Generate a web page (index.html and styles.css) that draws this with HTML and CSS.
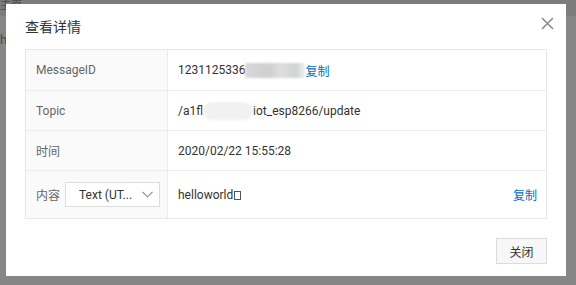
FILE: index.html
```html
<!DOCTYPE html>
<html lang="zh-CN">
<head>
    <meta charset="UTF-8">
    <title>查看详情</title>
    <link rel="stylesheet" href="styles.css">
</head>
<body>
    <div class="page-behind">
        <div class="behind-top">主面</div>
        <div class="behind-side">h</div>
    </div>

    <div class="modal">
        <div class="modal-header">
            <span class="modal-title">查看详情</span>
            <span class="modal-close">
                <svg width="13" height="13" viewBox="0 0 13 13">
                    <path d="M1 1 L12 12 M12 1 L1 12" stroke="#8c8c8c" stroke-width="1.6" fill="none"/>
                </svg>
            </span>
        </div>

        <div class="detail-table">
            <div class="row">
                <div class="label">MessageID</div>
                <div class="value">1231125336<span class="masked masked-id"></span><a class="copy">复制</a></div>
            </div>
            <div class="row">
                <div class="label">Topic</div>
                <div class="value">/a1fl<span class="masked masked-topic"></span>iot_esp8266/update</div>
            </div>
            <div class="row">
                <div class="label">时间</div>
                <div class="value">2020/02/22 15:55:28</div>
            </div>
            <div class="row row-tall">
                <div class="label">内容
                    <div class="select">
                        <span>Text (UT...</span>
                        <svg width="11" height="7" viewBox="0 0 11 7">
                            <path d="M0.5 0.8 L5.5 5.8 L10.5 0.8" stroke="#888" stroke-width="1.1" fill="none"/>
                        </svg>
                    </div>
                </div>
                <div class="value value-split">
                    <span>helloworld<span class="tofu"></span></span>
                    <a class="copy">复制</a>
                </div>
            </div>
        </div>

        <div class="modal-footer">
            <button class="btn">关闭</button>
        </div>
    </div>
</body>
</html>
```

FILE: styles.css
```css
body {
    margin: 0;
    width: 576px;
    height: 285px;
    background-color: #868686;
    font-family: Roboto, "Noto Sans CJK SC", sans-serif;
    font-size: 12px;
    color: #333;
    overflow: hidden;
    position: relative;
}
.page-behind {
    position: absolute;
    left: 0;
    top: 0;
    width: 576px;
    height: 285px;
}
.behind-top {
    height: 16px;
    background-color: #7c7c7c;
    color: #4a4a4a;
    font-size: 11px;
    line-height: 12px;
    overflow: hidden;
}
.behind-side {
    color: #4a4a4a;
    font-size: 13px;
    margin-top: 16px;
}
.modal {
    position: relative;
    margin: 4px 0 0 6px;
    width: 560px;
    height: 272px;
    background-color: #fff;
    box-sizing: border-box;
    padding: 0 19px;
}
.modal-header {
    height: 45px;
    display: flex;
    align-items: center;
    justify-content: space-between;
}
.modal-title {
    font-size: 14px;
    color: #333;
    margin-top: -1px;
}
.modal-close {
    display: flex;
    margin-right: -7px;
    margin-top: -6px;
}
.detail-table {
    border: 1px solid #e8e8e8;
    width: 522px;
    box-sizing: border-box;
}
.row {
    display: flex;
    height: 40px;
    box-sizing: border-box;
    border-bottom: 1px solid #ececec;
}
.row:first-child {
    height: 41px;
}
.row:last-child {
    border-bottom: none;
    height: 47px;
}
.label {
    width: 142px;
    flex-shrink: 0;
    background-color: #fafafa;
    border-right: 1px solid #ececec;
    color: #666;
    padding-left: 10px;
    box-sizing: border-box;
    display: flex;
    align-items: center;
}
.value {
    flex: 1;
    padding-left: 10px;
    display: flex;
    align-items: center;
    color: #333;
}
.value-split {
    justify-content: space-between;
    padding-right: 9px;
}
.copy {
    color: #0070cc;
    cursor: pointer;
}
.masked {
    display: inline-block;
    height: 15px;
    filter: blur(1.2px);
}
.masked-id {
    width: 60px;
    background: linear-gradient(90deg, #d9d9d9 0%, #cfcfcf 40%, #dedede 60%, #d2d2d2 85%, #eef3f8 100%);
}
.masked-topic {
    width: 50px;
    height: 18px;
    border-radius: 9px;
    background-color: #f1f1f1;
}
.tofu {
    display: inline-block;
    width: 5px;
    height: 7px;
    border: 1px solid #555;
    margin-left: 1px;
    vertical-align: -1px;
}
.select {
    margin-left: 5px;
    width: 95px;
    height: 25px;
    box-sizing: border-box;
    border: 1px solid #dcdcdc;
    background-color: #fff;
    display: flex;
    align-items: center;
    justify-content: space-between;
    padding: 0 6px 0 13px;
    color: #333;
}
.modal-footer {
    display: flex;
    justify-content: flex-end;
    padding-top: 19px;
}
.btn {
    width: 51px;
    height: 26px;
    background-color: #f7f7f7;
    border: 1px solid #dcdcdc;
    font-family: "Noto Sans CJK SC", sans-serif;
    font-size: 12px;
    color: #333;
    padding: 0;
}
```
